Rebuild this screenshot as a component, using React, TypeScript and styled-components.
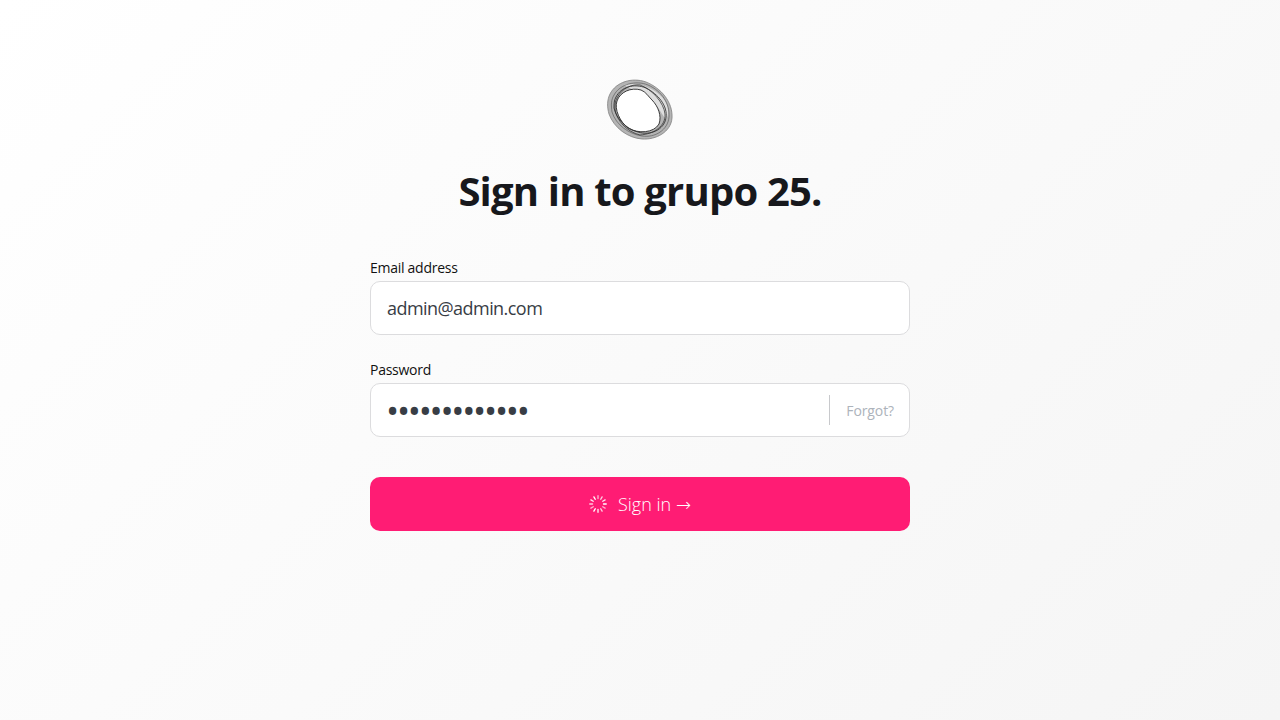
import * as React from 'react'

import styled, { createGlobalStyle } from 'styled-components'

const GlobalStyle = createGlobalStyle`
  html, body {
    margin: 0;
    padding: 0;
    height: 100%;
  }
  body {
    font-family: "Open Sans", "Noto Sans", "Liberation Sans", sans-serif;
  }
`

const Page = styled.main`
  display: flex;
  flex-direction: column;
  align-items: center;
  box-sizing: border-box;
  height: 720px;
  padding-top: 80px;
  overflow: hidden;
  background: linear-gradient(135deg, #ffffff 0%, #f5f5f5 100%);
`

const Logo = styled.svg`
  display: block;
  width: 66px;
  height: 61px;
  margin-top: -1px;
`

const Title = styled.h1`
  margin: 23px 0 0;
  font-size: 40px;
  line-height: 56px;
  font-weight: 700;
  letter-spacing: -0.82px;
  color: #17181c;
`

const Form = styled.form`
  display: flex;
  flex-direction: column;
  width: 540px;
  margin-top: 39px;
`

const Field = styled.div`
  display: flex;
  flex-direction: column;
  margin-bottom: 25px;
`

const Label = styled.label`
  font-size: 14px;
  line-height: 19px;
  margin-bottom: 4px;
  font-weight: 500;
  letter-spacing: -0.27px;
  color: #111;
`

const InputBox = styled.div`
  display: flex;
  align-items: center;
  box-sizing: border-box;
  height: 54px;
  padding: 0 15px 0 16px;
  background: #fff;
  border: 1px solid #dcdcde;
  border-radius: 10px;
`

const Input = styled.input`
  flex: 1;
  min-width: 0;
  padding: 0;
  border: 0;
  outline: 0;
  background: transparent;
  font-family: inherit;
  font-size: 18px;
  letter-spacing: -0.55px;
  color: #383d45;

  &[type='password'] {
    font-size: 35px;
    letter-spacing: -2.27px;
    height: 40px;
    margin-left: -1px;
  }
`

const Divider = styled.span`
  width: 1px;
  height: 30px;
  margin-right: 16px;
  background: #c8c9cc;
`

const Forgot = styled.a`
  font-size: 14px;
  letter-spacing: -0.1px;
  color: #adb3bb;
`

const Submit = styled.button`
  display: flex;
  align-items: center;
  justify-content: center;
  gap: 11px;
  height: 54px;
  margin-top: 15px;
  padding: 0;
  border: 0;
  border-radius: 10px;
  background: #ff1c74;
  font-family: inherit;
  font-size: 18px;
  font-weight: 300;
  color: #fff;
`

const Arrow = styled.span`
  font-family: "DejaVu Sans", sans-serif;
  font-size: 18px;
`

const Spinner = () => (
  <svg width="18" height="18" viewBox="0 0 18 18" fill="none" stroke="#fff" strokeWidth="1.4" strokeLinecap="round">
    {Array.from({ length: 12 }).map((_, i) => (
      <line key={i} x1="9" y1="0.8" x2="9" y2="3.5" transform={`rotate(${i * 30} 9 9)`} opacity={0.65 + (i % 4) * 0.12} />
    ))}
  </svg>
)

export default function App() {
  return (
    <Page>
      <GlobalStyle />
      <Logo viewBox="17 9 66 61" fill="none">
        <path d="M20 24C26 12 42 7 56 12C71 18 83 32 82 48C81 62 66 70 52 69C38 68 24 58 19 44C17 37 17 30 20 24Z" fill="#b4b4b4" />
        <path d="M34 15C50 11 68 20 75 31C79 38 79 44 76 50C72 44 66 33 58 27C52 22 44 21 34 15Z" fill="#dedede" />
        <path d="M27 31C30 22 41 17 51 20C56 22 58 26 62 30C68 36 72 46 69 54C64 63 48 64 38 58C30 52 24 39 27 31Z" fill="#fff" />
        <path d="M20 24C26 12 42 7 56 12C71 18 83 32 82 48C81 62 66 70 52 69C38 68 24 58 19 44C17 37 17 30 20 24Z" stroke="#808080" strokeWidth=".8" />
        <path d="M24 25C30 14 46 10 58 15C72 21 80 34 79 47C78 60 65 68 52 66C39 64 26 55 22 42C21 35 21 30 24 25Z" stroke="#555" strokeWidth=".8" opacity=".8" />
        <path d="M26 27C31 17 44 13 56 18C68 24 78 36 76 48C74 60 60 66 48 62C36 59 26 48 24 38C24 34 24 30 26 27Z" stroke="#2e2e2e" strokeWidth="1" opacity=".85" />
        <path d="M27 28C32 18 42 14 50 15C62 19 74 33 75 44C76 56 64 64 50 65C37 62 26 50 25 39C25 35 25 31 27 28Z" stroke="#333" strokeWidth=".9" opacity=".85" />
        <path d="M27 31C30 22 41 17 51 20C56 22 58 26 62 30C68 36 72 46 69 54C64 63 48 64 38 58C30 52 24 39 27 31Z" stroke="#2a2a2a" strokeWidth="1" opacity=".9" />
      </Logo>
      <Title>Sign in to grupo 25.</Title>
      <Form onSubmit={(event) => event.preventDefault()}>
        <Field>
          <Label htmlFor="email">Email address</Label>
          <InputBox>
            <Input id="email" type="email" value="admin@admin.com" readOnly />
          </InputBox>
        </Field>
        <Field>
          <Label htmlFor="password">Password</Label>
          <InputBox>
            <Input id="password" type="password" value="aaaaaaaaaaaaa" readOnly />
            <Divider />
            <Forgot>Forgot?</Forgot>
          </InputBox>
        </Field>
        <Submit type="submit">
          <Spinner />
          <span>Sign in <Arrow>→</Arrow></span>
        </Submit>
      </Form>
    </Page>
  )
}
